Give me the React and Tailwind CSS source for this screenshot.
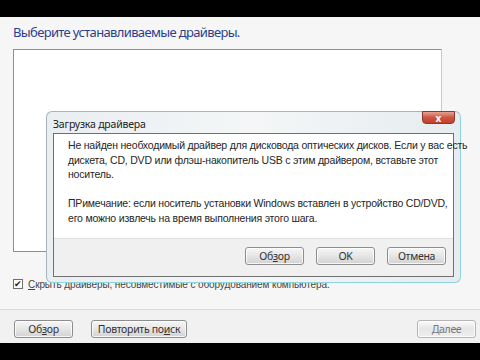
import React from "react";

const font = { fontFamily: '"Noto Sans", "Open Sans", sans-serif' };
const arial = { fontFamily: '"Liberation Sans", Arial, sans-serif' };

const WinButton = ({ children, className = "" }) => (
    <button
        className={`h-[18px] rounded-[3px] border border-[#8d8d8d] bg-gradient-to-b from-[#f6f6f6] via-[#e6e6e6] to-[#d2d2d2] text-[10.5px] tracking-[-0.3px] text-[#333] leading-none shadow-[inset_0_0_0_1px_rgba(255,255,255,0.8)] ${className}`}
    >
        {children}
    </button>
);

const App = () => {
    return (
        <div className="relative w-[480px] h-[360px] bg-black overflow-hidden" style={font}>
            <div className="h-[17px] bg-black" />

            <div className="h-[326px] flex flex-col bg-[#f6f6f6]">
                <div className="flex-1 px-[13px] pt-[5px]">
                    <h1 className="text-[13px] tracking-[-0.65px] text-[#2a3f8f] leading-[20px]">
                        Выберите устанавливаемые драйверы.
                    </h1>
                    <div className="mt-[7px] w-[429px] h-[203px] bg-white border border-[#8e8e8e] border-r-[#c9c9c9]" />
                    <label className="mt-[25px] h-[14px] flex items-center gap-[5px] text-[10px] tracking-[-0.1px] text-[#444]" style={arial}>
                        <span className="w-[10px] h-[10px] border border-[#6f6f6f] bg-white flex items-center justify-center text-[9px] leading-none text-[#222]">
                            ✔
                        </span>
                        <span>
                            <u>С</u>крыть драйверы, несовместимые с оборудованием компьютера.
                        </span>
                    </label>
                </div>

                <div className="h-[34px] border-t border-[#dcdcdc] bg-[#f1f1f1] flex items-start pt-[10px] px-[14px]">
                    <WinButton className="w-[59px]">
                        Об<u>з</u>ор
                    </WinButton>
                    <WinButton className="w-[96px] ml-[18px]">
                        Повторить по<u>и</u>ск
                    </WinButton>
                    <WinButton className="w-[59px] ml-auto mr-[-10px] border-[#b5b5b5] text-[#777] from-[#fbfbfb] to-[#efefef]">
                        <u>Д</u>алее
                    </WinButton>
                </div>
            </div>

            <div className="h-[17px] bg-black" />

            {/* dialog window over the page */}
            <div className="absolute left-[46px] top-[111px] w-[415px] h-[172px] rounded-[6px] border border-[#a7b3ba] border-r-[#8fd3dc] border-b-[#8fd3dc] bg-gradient-to-r from-[#e9eef1] via-[#f4f6f7] to-[#e6ecef] px-[6px] pb-[5px] flex flex-col">
                <div className="absolute right-[5px] top-[-1px] w-[33px] h-[13px] rounded-b-[4px] border border-[#8a3a30] bg-gradient-to-b from-[#e6a093] via-[#cd5643] to-[#c0402c] flex items-center justify-center text-white text-[10px] font-bold leading-none">
                    x
                </div>
                <div className="h-[21px] flex items-end pb-[4px] text-[10.5px] tracking-[-0.2px] text-[#222] leading-none">
                    Загрузка драйвера
                </div>
                <div className="flex-1 border border-[#707070] flex flex-col">
                    <div className="h-[104px] bg-white pl-[14px] pt-[4px] text-[10.5px] tracking-[-0.2px] leading-[14.5px] text-[#262626] whitespace-nowrap" style={arial}>
                        <p>
                            Не найден необходимый драйвер для дисковода оптических дисков. Если у вас есть
                            <br />
                            дискета, CD, DVD или флэш-накопитель USB с этим драйвером, вставьте этот
                            <br />
                            носитель.
                        </p>
                        <p className="mt-[14.5px]">
                            ПРимечание: если носитель установки Windows вставлен в устройство CD/DVD,
                            <br />
                            его можно извлечь на время выполнения этого шага.
                        </p>
                    </div>
                    <div className="flex-1 border-t border-[#dfdfdf] bg-[#f0f0f0] flex items-start justify-end gap-[12px] pt-[8px] pr-[7px]">
                        <WinButton className="w-[59px]">
                            Об<u>з</u>ор
                        </WinButton>
                        <WinButton className="w-[59px] border-[#3c7fb1] shadow-[inset_0_0_0_1px_#c2e4f6]">
                            OK
                        </WinButton>
                        <WinButton className="w-[59px]">Отмена</WinButton>
                    </div>
                </div>
            </div>
        </div>
    );
};

export default App;
